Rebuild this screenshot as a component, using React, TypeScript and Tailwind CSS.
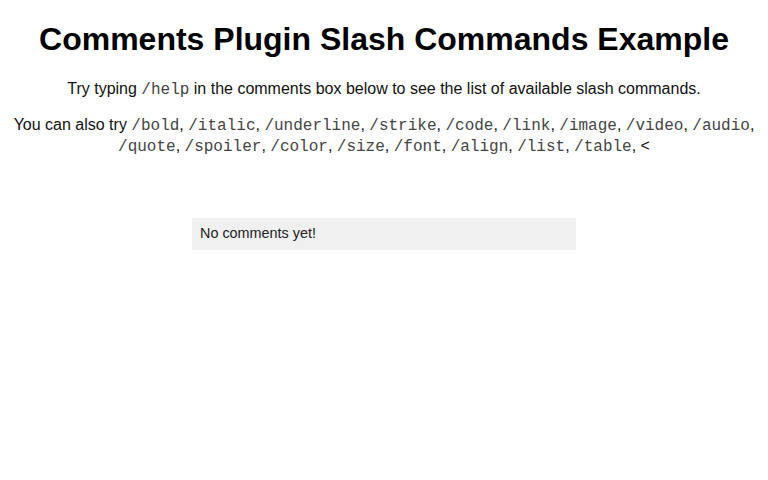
const commands = [
  "/bold",
  "/italic",
  "/underline",
  "/strike",
  "/code",
  "/link",
  "/image",
  "/video",
  "/audio",
  "/quote",
  "/spoiler",
  "/color",
  "/size",
  "/font",
  "/align",
  "/list",
  "/table",
];

const mono = "font-['Liberation_Mono','Courier_New',monospace] text-[16px] font-light text-[#444]";

export default function App() {
  return (
    <div className="min-h-[480px] bg-white text-[#111] font-['Liberation_Sans',Arial,sans-serif]">
      <h1 className="pt-[21px] text-center text-[32px] font-bold leading-[37px] text-black">
        Comments Plugin Slash Commands Example
      </h1>

      <p className="mt-[22px] text-center text-[16px] leading-[18px]">
        Try typing <code className={mono}>/help</code> in the comments box below to see the list of available slash
        commands.
      </p>

      <p className="mx-auto mt-[16px] max-w-[748px] text-center text-[16px] leading-[20px]">
        You can also try{" "}
        {commands.map((c) => (
          <span key={c}>
            <code className={mono}>{c}</code>,{" "}
          </span>
        ))}
        &lt;
      </p>

      <div className="mx-auto mt-[61px] flex h-8 w-[384px] items-center bg-[#f0f0f0] px-2 text-[14.4px] text-[#222]">
        No comments yet!
      </div>
    </div>
  );
}
